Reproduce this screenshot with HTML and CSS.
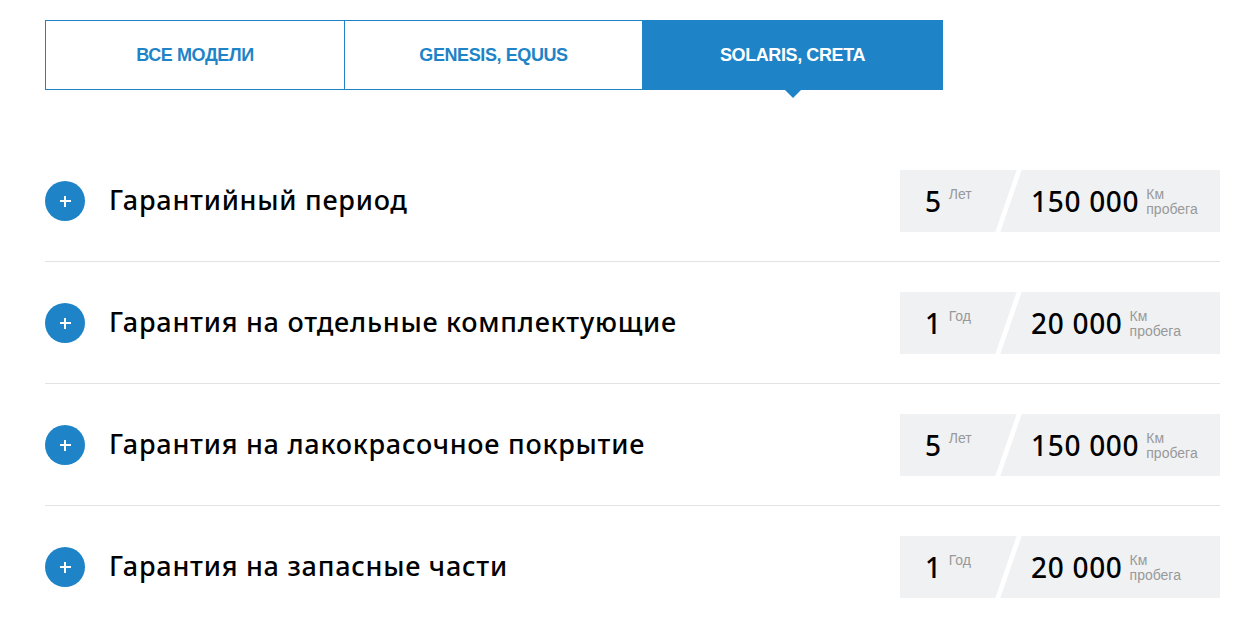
FILE: index.html
```html
<!DOCTYPE html>
<html lang="ru">
<head>
  <meta charset="UTF-8">
  <title>Гарантия</title>
  <link rel="stylesheet" href="styles.css">
</head>
<body>
  <div class="page">
    <div class="tabs">
      <div class="tab">ВСЕ МОДЕЛИ</div>
      <div class="tab">GENESIS, EQUUS</div>
      <div class="tab active">SOLARIS, CRETA</div>
    </div>

    <div class="list">
      <div class="row">
        <span class="plus"></span>
        <div class="title">Гарантийный период</div>
        <div class="stats">
          <div class="years"><span class="num">5</span><span class="unit">Лет</span></div>
          <div class="km"><span class="num">150 000</span><span class="unit">Км<br>пробега</span></div>
        </div>
      </div>
      <div class="row">
        <span class="plus"></span>
        <div class="title">Гарантия на отдельные комплектующие</div>
        <div class="stats">
          <div class="years"><span class="num">1</span><span class="unit">Год</span></div>
          <div class="km"><span class="num">20 000</span><span class="unit">Км<br>пробега</span></div>
        </div>
      </div>
      <div class="row">
        <span class="plus"></span>
        <div class="title">Гарантия на лакокрасочное покрытие</div>
        <div class="stats">
          <div class="years"><span class="num">5</span><span class="unit">Лет</span></div>
          <div class="km"><span class="num">150 000</span><span class="unit">Км<br>пробега</span></div>
        </div>
      </div>
      <div class="row last">
        <span class="plus"></span>
        <div class="title">Гарантия на запасные части</div>
        <div class="stats">
          <div class="years"><span class="num">1</span><span class="unit">Год</span></div>
          <div class="km"><span class="num">20 000</span><span class="unit">Км<br>пробега</span></div>
        </div>
      </div>
    </div>
  </div>
</body>
</html>
```

FILE: styles.css
```css
body { margin: 0; padding: 0; background: #fff; font-family: "Noto Sans", Arial, sans-serif; color: #000; }
.page { padding: 20px 28px 0 45px; }

.tabs { display: flex; }
.tab { position: relative; width: 298px; height: 70px; box-sizing: border-box; border: 1px solid #1e84c7; border-left: none; display: flex; align-items: center; justify-content: center; font-family: "Liberation Sans", Arial, sans-serif; font-weight: bold; font-size: 18px; color: #1e84c7; letter-spacing: -0.4px; }
.tab:first-child { width: 300px; border-left: 1px solid #1e84c7; }
.tab.active { width: 300px; background: #1e84c7; color: #fff; }
.tab.active::after { content: ""; position: absolute; left: 50%; bottom: -9px; margin-left: -9px; border-left: 9px solid transparent; border-right: 9px solid transparent; border-top: 9px solid #1e84c7; }

.list { margin-top: 50px; width: 1175px; }
.row { display: flex; align-items: center; padding: 30px 0 29px; border-bottom: 1px solid #e3e3e3; }
.row.last { border-bottom: none; }
.plus { position: relative; flex: none; width: 40px; height: 40px; border-radius: 50%; background: #1e84c7; }
.plus::before, .plus::after { content: ""; position: absolute; left: 50%; top: 50%; background: #fff; }
.plus::before { width: 11px; height: 2px; margin: -1px 0 0 -5.5px; }
.plus::after { width: 2px; height: 11px; margin: -5.5px 0 0 -1px; }
.title { flex: 1; margin-left: 24px; margin-top: -3px; font-size: 27px; font-weight: 500; letter-spacing: 0.75px; }

.stats { position: relative; display: flex; width: 320px; height: 62px; background: #f0f1f3; }
.stats::after { content: ""; position: absolute; left: 106px; top: 0; width: 5px; height: 62px; background: #fff; transform: skewX(-19deg); }
.years { width: 106px; padding-left: 25px; display: flex; align-items: flex-start; box-sizing: border-box; }
.km { padding-left: 25px; display: flex; align-items: flex-start; }
.num { margin-top: 15px; font-size: 28px; font-weight: 500; line-height: 32px; letter-spacing: 0.7px; }
.unit { margin-left: 7px; margin-top: 17px; font-family: "Liberation Sans", Arial, sans-serif; font-size: 14px; line-height: 15px; color: #999; }
```
